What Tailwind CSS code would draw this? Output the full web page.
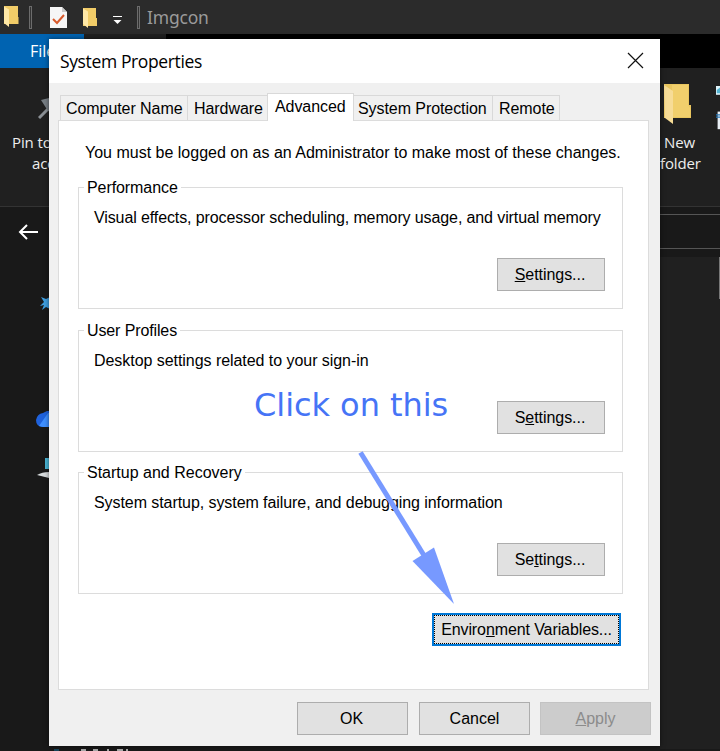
<!DOCTYPE html>
<html lang="en">
<head>
<meta charset="utf-8">
<title>System Properties</title>
<script src="https://cdn.jsdelivr.net/npm/@tailwindcss/browser@4"></script>
</head>
<body class="relative w-[720px] h-[751px] overflow-hidden bg-[#191919] font-['Open_Sans','Noto_Sans',sans-serif] text-white">

<!-- Explorer window behind the dialog -->
<div class="flex flex-col w-[720px] h-[751px]">
  <header class="flex h-[34px] shrink-0 bg-[#2b2b2b]">
    <svg class="shrink-0" width="142" height="34" viewBox="0 0 142 34">
      <path d="M4 6h14v11h.5v7H4z" fill="#f1cc68"/><path d="M4 6.500l5 3V27l-5-4z" fill="#ffe8a6"/>
      <rect x="29.500" y="6.500" width="2" height="22" fill="#333" stroke="#6c6c6c"/>
      <path d="M50 7h12l5 5v16H50z" fill="#f6f6f6"/><path d="M62 7v5h5z" fill="#c9c9c9"/><path d="M53 19l4 4 7-8" fill="none" stroke="#d85a2b" stroke-width="2"/>
      <path d="M83 8h13v10h1v8H83z" fill="#f1cc68"/><path d="M83 8.500l5 3V28l-5-4z" fill="#ffe8a6"/>
      <path d="M113 16.500h9" stroke="#fff" stroke-width="1"/><path d="M113.500 20h8l-4 4z" fill="#fff"/>
      <rect x="137.500" y="6.500" width="2" height="22" fill="#333" stroke="#6c6c6c"/>
    </svg>
    <div class="pl-[5px] pt-[5px] text-[17.500px] leading-[25px] tracking-[-0.2px] text-[#9a9a9a] font-['Noto_Sans']">Imgcon</div>
  </header>
  <div class="flex h-[34px] shrink-0 bg-black">
    <div class="w-[84px] bg-[#0063b1] pl-[30px] pt-[7px] text-[16px] leading-5">File</div>
    <div class="w-[82px] bg-[#202020]"></div>
  </div>
  <section class="flex justify-between h-[139px] shrink-0 bg-[#202020] border-b border-[#333]">
    <div class="w-[100px] pt-[29px]">
      <svg class="ml-[38px]" width="30" height="26" viewBox="0 0 30 26"><path d="M1 21L10 12" stroke="#8b9095" stroke-width="3" fill="none"/><path d="M3 3l8-2 3 14-4-1z" fill="#777e84"/></svg>
      <div class="pt-[9px] pl-3 text-[15px] leading-[21px] tracking-[-0.1px] text-[#eee]">Pin to Quick<br><span class="pl-5">access</span></div>
    </div>
    <div class="flex w-[60px] pt-[12px]">
      <div class="w-[44px]">
        <svg class="ml-1" width="28" height="46" viewBox="0 0 28 46"><path d="M0 4h25v21h2v13H0z" fill="#e9c65f"/><path d="M8 5h16v20l2 3v9H8z" fill="#f1cf6c"/><path d="M0 5l9 6v33l-8-6z" fill="#f7dc96"/></svg>
        <div class="pt-[6px] text-[15px] leading-[21px] tracking-[-0.15px] text-[#eee] text-center w-[39px]">New<br>folder</div>
      </div>
      <svg class="ml-[12px] shrink-0" width="4" height="60" viewBox="0 0 5 60"><path d="M0 0h5v11H0z" fill="#e0f4fa"/><path d="M1 9V5l4-3v7z" fill="#55b4d2"/><path d="M2 32h3v22H2z" fill="#e8eef4"/><path d="M0 36h5M0 39h5" stroke="#2878b8" stroke-width="1.500"/></svg>
    </div>
  </section>
  <section class="flex justify-between h-[50px] shrink-0">
    <svg class="mt-[15px] ml-[18px]" width="22" height="20" viewBox="0 0 22 20"><path d="M20 10H2M9 3L2 10l7 7" stroke="#fff" stroke-width="2" fill="none"/></svg>
    <div class="w-[60px] mt-[7px] h-[35px] border-y border-[#555]"></div>
  </section>
  <section class="flex justify-between grow">
    <div class="w-[70px] pl-[36px]">
      <svg width="20" height="230" viewBox="36 257 20 230">
        <path d="M41 297l5 2 6-3v14l-6-3-4 3 2-5-4 1 4-4z" fill="#3f9fe0"/>
        <path d="M36 420q1-6 7-7l4-2h8v16H42q-6-1-6-7z" fill="#1f62dc"/><path d="M39 426l9-13h7v14H43z" fill="#3f90ff"/>
        <path d="M45 458h9v11h-9z" fill="#4ab6d6"/><path d="M37 475q5-3 12-3v6z" fill="#d8dcde"/>
      </svg>
    </div>
    <div class="w-[60px] bg-[#202020]"><div class="ml-[59px] w-px h-[42px] bg-[#777]"></div></div>
  </section>
  <footer class="flex h-[2px] shrink-0 bg-[#191919]"><div class="ml-[54px] w-[5px] bg-[#17455c]"></div>
    <svg class="ml-[21px]" width="50" height="2"><path d="M1 1h5M13 1h5M27 1h2M37 1h6M46 1h2" stroke="#aaa" stroke-width="2"/></svg>
  </footer>
</div>

<!-- System Properties dialog -->
<main class="absolute left-[49px] top-[39px] w-[611px] h-[707px] bg-[#f0f0f0] text-black flex flex-col font-['Liberation_Sans',Arial,sans-serif] text-[16px] leading-5 shadow-[0_0_5px_#0008]">
  <div class="flex justify-between h-[44px] shrink-0 bg-white pl-[11px] pr-4">
    <h1 class="pt-[10px] font-['Open_Sans'] text-[17.500px] leading-6 tracking-[-0.37px] whitespace-nowrap">System Properties</h1>
    <svg class="mt-[13px]" width="17" height="17" viewBox="0 0 17 17"><path d="M1 1l15 15M16 1L1 16" stroke="#111" stroke-width="1.200"/></svg>
  </div>

  <nav class="flex items-end h-[38px] shrink-0 pl-[11px] whitespace-nowrap tracking-[-0.07px]">
    <div class="w-[128px] h-[26px] border border-b-0 border-[#d9d9d9] pl-[5px] pt-[3px]">Computer Name</div>
    <div class="w-[79px] h-[26px] border-t border-[#d9d9d9] pl-[6px] pt-[3px]">Hardware</div>
    <div class="relative z-10 w-[87px] h-[28px] border border-b-0 border-[#d9d9d9] bg-white pl-[7px] pt-[3px]">Advanced</div>
    <div class="w-[139px] h-[26px] border-t border-r border-[#d9d9d9] pl-1 pt-[3px]">System Protection</div>
    <div class="w-[67px] h-[26px] border-t border-r border-[#d9d9d9] pl-[6px] pt-[3px]">Remote</div>
  </nav>

  <section class="-mt-px ml-[9px] w-[591px] h-[570px] shrink-0 bg-white border border-[#dcdcdc] pl-[19px]">
    <p class="pt-[22px] pl-[7px] h-[66px] whitespace-nowrap">You must be logged on as an Administrator to make most of these changes.</p>

    <div class="w-[545px] h-[122px] border border-[#dcdcdc] flex flex-col items-start">
      <h2 class="-mt-[10px] ml-[5px] px-[3px] bg-white tracking-[-0.08px]">Performance</h2>
      <p class="mt-[10px] ml-[15px] whitespace-nowrap tracking-[-0.11px]">Visual effects, processor scheduling, memory usage, and virtual memory</p>
      <button class="mt-[30px] ml-[418px] w-[108px] h-[33px] shrink-0 border border-[#adadad] bg-[#e1e1e1] pr-[2px] tracking-[-0.05px]"><u>S</u>ettings...</button>
    </div>
    <div class="mt-[21px] w-[545px] h-[122px] border border-[#dcdcdc] flex flex-col items-start">
      <h2 class="-mt-[10px] ml-[5px] px-[3px] bg-white tracking-[-0.12px]">User Profiles</h2>
      <p class="mt-[10px] ml-[15px] whitespace-nowrap tracking-[-0.05px]">Desktop settings related to your sign-in</p>
      <button class="mt-[30px] ml-[418px] w-[108px] h-[33px] shrink-0 border border-[#adadad] bg-[#e1e1e1] pr-[2px] tracking-[-0.05px]">S<u>e</u>ttings...</button>
    </div>
    <div class="mt-[20px] w-[545px] h-[122px] border border-[#dcdcdc] flex flex-col items-start">
      <h2 class="-mt-[10px] ml-[5px] px-[3px] bg-white">Startup and Recovery</h2>
      <p class="mt-[10px] ml-[15px] whitespace-nowrap tracking-[-0.07px]">System startup, system failure, and debugging information</p>
      <button class="mt-[30px] ml-[418px] w-[108px] h-[33px] shrink-0 border border-[#adadad] bg-[#e1e1e1] pr-[2px] tracking-[-0.05px]">Se<u>t</u>tings...</button>
    </div>
    <button class="mt-[19px] ml-[354px] w-[189px] h-[33px] border-2 border-[#0078d7] bg-[#e1e1e1] flex"><span class="grow h-[29px] border border-dotted border-black leading-[27px] whitespace-nowrap tracking-[-0.1px]">Enviro<u>n</u>ment Variables...</span></button>
  </section>

  <div class="mt-3 flex pl-[248px]">
    <button class="w-[111px] h-[33px] border border-[#adadad] bg-[#e1e1e1] pr-[2px]">OK</button>
    <button class="ml-[11px] w-[111px] h-[33px] border border-[#adadad] bg-[#e1e1e1]">Cancel</button>
    <button class="ml-[10px] w-[111px] h-[33px] border border-[#c3c3c3] bg-[#cccccc] text-[#8b8b8b]"><u>A</u>pply</button>
  </div>
</main>

<!-- Annotation drawn over the dialog -->
<div class="absolute z-20 left-[254px] top-[385px] text-[32px] leading-10 text-[#4674f6] whitespace-nowrap font-['DejaVu_Sans',sans-serif] tracking-[-0.05px]">Click on this</div>
<svg class="absolute z-20 left-[350px] top-[445px]" width="110" height="165" viewBox="350 445 110 165"><path d="M360.500 452.500L425 557" stroke="#7799ff" stroke-width="5"/><path d="M412.500 561L434 547.500L454 604z" fill="#7799ff"/></svg>
</body>
</html>
